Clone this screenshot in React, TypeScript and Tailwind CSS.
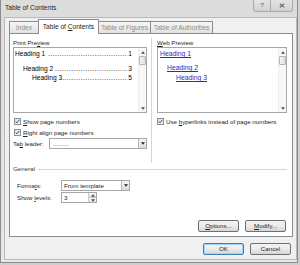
import React from "react";

function CheckBox() {
  return (
    <span className="w-[7px] h-[7px] shrink-0 border border-[#8e8f8f] bg-gradient-to-br from-[#dedede] to-white flex items-center justify-center">
      <svg viewBox="0 0 6 6" className="w-[5px] h-[5px]">
        <path d="M0.8 3 L2.4 4.6 L5.3 1" stroke="#34456a" strokeWidth="1.2" fill="none" />
      </svg>
    </span>
  );
}

function Arrow({ up }: { up?: boolean }) {
  return (
    <svg viewBox="0 0 6 4" className="w-[4px] h-[3px]">
      <path d={up ? "M0 4 L3 0 L6 4 Z" : "M0 0 L6 0 L3 4 Z"} fill="#4d4d4d" />
    </svg>
  );
}

function ScrollBar() {
  return (
    <div className="w-[8px] shrink-0 self-stretch bg-[#f7f7f7] border-l border-[#ececec] flex flex-col items-center">
      <div className="h-[8px] flex items-center justify-center">
        <Arrow up />
      </div>
      <div className="w-[7px] h-[9px] border border-[#b5b5b5] rounded-[1px] bg-gradient-to-r from-[#f3f3f3] to-[#dedede]" />
      <div className="flex-1" />
      <div className="h-[8px] flex items-center justify-center">
        <Arrow />
      </div>
    </div>
  );
}

function Leader({ label, num, dots, pad }: { label: string; num: string; dots: number; pad: string }) {
  return (
    <div className={`flex items-center h-[9px] leading-[9px] text-[6.6px] text-black min-w-0 ${pad}`}>
      <span className="whitespace-nowrap shrink-0">{label}</span>
      <span className="flex-1 min-w-0 overflow-hidden flex justify-end">
        <span className="whitespace-nowrap tracking-[0.5px] shrink-0">{".".repeat(dots)}</span>
      </span>
      <span className="pl-[1px] shrink-0">{num}</span>
    </div>
  );
}

function DropArrowButton() {
  return (
    <span className="w-[8px] self-stretch border-l border-[#b8b8b8] bg-gradient-to-b from-[#f4f4f4] to-[#dcdcdc] flex items-center justify-center">
      <svg viewBox="0 0 6 4" className="w-[4px] h-[3px]">
        <path d="M0 0 L6 0 L3 4 Z" fill="#222" />
      </svg>
    </span>
  );
}

function Button({ children, w, primary }: { children: React.ReactNode; w: string; primary?: boolean }) {
  return (
    <div
      className={`${w} h-[12px] rounded-[2px] border flex items-center justify-center text-[6.2px] text-[#1e1e1e] bg-gradient-to-b from-[#f4f4f4] via-[#ebebeb] to-[#d6d6d6] ${
        primary ? "border-[#3c7fb1] shadow-[inset_0_0_0_1px_#9fd4f2]" : "border-[#707070]"
      }`}
    >
      {children}
    </div>
  );
}

export default function App() {
  const tabBase =
    "h-[12px] flex items-center justify-center whitespace-nowrap border border-b-0 border-[#898c95] text-[6.6px] -ml-px first:ml-0";
  return (
    <div className="w-[300px] h-[265px] bg-[#cfcfcf] font-['Liberation_Sans',Arial,sans-serif] text-[#1e1e1e]">
      <div className="w-[298px] h-[263px] bg-gradient-to-b from-[#dcdcdc] to-[#e8e8e8] border-l border-r border-b border-[#8c8c8c] flex flex-col">
        {/* title bar */}
        <div className="h-[17px] flex items-start">
          <div className="pl-[4px] pt-[4px] text-[6.6px] leading-[8px]">Table of Contents</div>
          <div className="flex-1" />
          <div className="flex mr-[4px]">
            <div className="w-[18px] h-[12px] border border-[#a9a9a9] border-t-0 rounded-bl-[3px] bg-gradient-to-b from-[#e4e4e4] to-[#d2d2d2] flex items-center justify-center text-[6px] text-[#707070] font-bold">
              ?
            </div>
            <div className="w-[22px] h-[12px] border border-l-0 border-t-0 border-[#a9a9a9] rounded-br-[3px] bg-gradient-to-b from-[#e4e4e4] to-[#d2d2d2] flex items-center justify-center">
              <svg viewBox="0 0 8 7" className="w-[6px] h-[5px]">
                <path d="M1 1 L7 6 M7 1 L1 6" stroke="#6e6e6e" strokeWidth="1.6" />
              </svg>
            </div>
          </div>
        </div>

        {/* client area */}
        <div className="ml-[3px] w-[293px] h-[243px] bg-[#f0f0f0] border border-[#b9b9b9] flex flex-col">
          {/* tabs */}
          <div className="mt-[2px] ml-[4px] h-[13px] flex items-end">
            <div className={`${tabBase} w-[30px] bg-gradient-to-b from-[#f6f6f6] to-[#e2e2e2] text-[#8d8d8d]`}>Index</div>
            <div className={`${tabBase} w-[61px] h-[15px] bg-white text-[#1e1e1e] relative z-10 -mb-px`}>
              Table of&nbsp;<u>C</u>ontents
            </div>
            <div className={`${tabBase} w-[53px] bg-gradient-to-b from-[#f6f6f6] to-[#e2e2e2] text-[#8d8d8d]`}>
              Table of Figures
            </div>
            <div className={`${tabBase} w-[63px] bg-gradient-to-b from-[#f6f6f6] to-[#e2e2e2] text-[#8d8d8d]`}>
              Table of Authorities
            </div>
          </div>

          {/* panel */}
          <div className="ml-[4px] w-[284px] h-[204px] bg-white border border-[#898c95] flex flex-col text-[6.2px]">
            <div className="h-[129px] flex pl-[3px]">
              {/* print preview */}
              <div className="w-[138px] flex flex-col pt-[5px]">
                <div className="h-[8px] leading-[8px]">
                  Print Pre<u>v</u>iew
                </div>
                <div className="w-[134px] h-[66px] border border-[#a5a7ab] flex overflow-hidden">
                  <div className="flex-1 min-w-0 flex flex-col pt-[1px] pr-[6px]">
                    <Leader label="Heading 1 " num="1" dots={34} pad="pl-[1px] mb-[6px]" />
                    <Leader label="Heading 2 " num="3" dots={31} pad="pl-[9px]" />
                    <Leader label="Heading 3" num="5" dots={28} pad="pl-[18px]" />
                  </div>
                  <ScrollBar />
                </div>
                <div className="mt-[3px] h-[11px] flex items-center gap-[2px] pl-[1px]">
                  <CheckBox />
                  <span>
                    <u>S</u>how page numbers
                  </span>
                </div>
                <div className="h-[11px] flex items-center gap-[2px] pl-[1px]">
                  <CheckBox />
                  <span>
                    <u>R</u>ight align page numbers
                  </span>
                </div>
                <div className="h-[11px] flex items-center">
                  <span className="w-[36px]">
                    Ta<u>b</u> leader:
                  </span>
                  <div className="w-[98px] h-[11px] border border-[#a5a7ab] flex items-center">
                    <span className="flex-1 pl-[3px] leading-[6px] tracking-[0.3px]">........</span>
                    <DropArrowButton />
                  </div>
                </div>
              </div>

              <div className="w-px h-[125px] mt-[4px] bg-[#d5d5d5]" />

              {/* web preview */}
              <div className="w-[136px] flex flex-col pt-[5px] pl-[5px]">
                <div className="h-[8px] leading-[8px]">
                  <u>W</u>eb Preview
                </div>
                <div className="w-[130px] h-[66px] border border-[#a5a7ab] flex">
                  <div className="flex-1 flex flex-col text-[6.8px] text-[#2a2ad0] underline">
                    <div className="h-[9px] leading-[9px] pl-[2px] mt-[1px]">Heading 1</div>
                    <div className="h-[9px] leading-[9px] pl-[9px] mt-[5px]">Heading 2</div>
                    <div className="h-[9px] leading-[9px] pl-[18px] mt-[1px]">Heading 3</div>
                  </div>
                  <ScrollBar />
                </div>
                <div className="mt-[3px] h-[11px] flex items-center gap-[2px]">
                  <CheckBox />
                  <span>
                    Use <u>h</u>yperlinks instead of page numbers
                  </span>
                </div>
              </div>
            </div>

            {/* general */}
            <div className="h-[12px] flex items-center pl-[3px] pr-[5px] gap-[3px]">
              <span className="text-[#3a3a3a]">General</span>
              <div className="flex-1 h-px bg-[#d5d5d5]" />
            </div>
            <div className="mt-[5px] h-[11px] flex items-center pl-[7px]">
              <span className="w-[44px]">
                Forma<u>t</u>s:
              </span>
              <div className="w-[69px] h-[11px] border border-[#a5a7ab] flex items-center">
                <span className="flex-1 pl-[2px]">From template</span>
                <DropArrowButton />
              </div>
            </div>
            <div className="mt-[1px] h-[11px] flex items-center pl-[7px]">
              <span className="w-[44px]">
                Show <u>l</u>evels:
              </span>
              <div className="w-[36px] h-[11px] border border-[#a5a7ab] flex items-center">
                <span className="flex-1 pl-[2px]">3</span>
                <span className="w-[8px] self-stretch border-l border-[#c8c8c8] flex flex-col">
                  <span className="flex-1 flex items-center justify-center bg-gradient-to-b from-[#f6f6f6] to-[#e4e4e4] border-b border-[#c8c8c8]">
                    <Arrow up />
                  </span>
                  <span className="flex-1 flex items-center justify-center bg-gradient-to-b from-[#f6f6f6] to-[#e4e4e4]">
                    <Arrow />
                  </span>
                </span>
              </div>
            </div>
            <div className="mt-[17px] flex justify-end gap-[6px] pr-[6px]">
              <Button w="w-[41px]">
                <u>O</u>ptions...
              </Button>
              <Button w="w-[41px]">
                <u>M</u>odify...
              </Button>
            </div>
          </div>

          {/* dialog buttons */}
          <div className="mt-[6px] flex justify-end gap-[6px] pr-[5px]">
            <Button w="w-[41px]" primary>
              OK
            </Button>
            <Button w="w-[41px]">Cancel</Button>
          </div>
        </div>
      </div>
    </div>
  );
}
